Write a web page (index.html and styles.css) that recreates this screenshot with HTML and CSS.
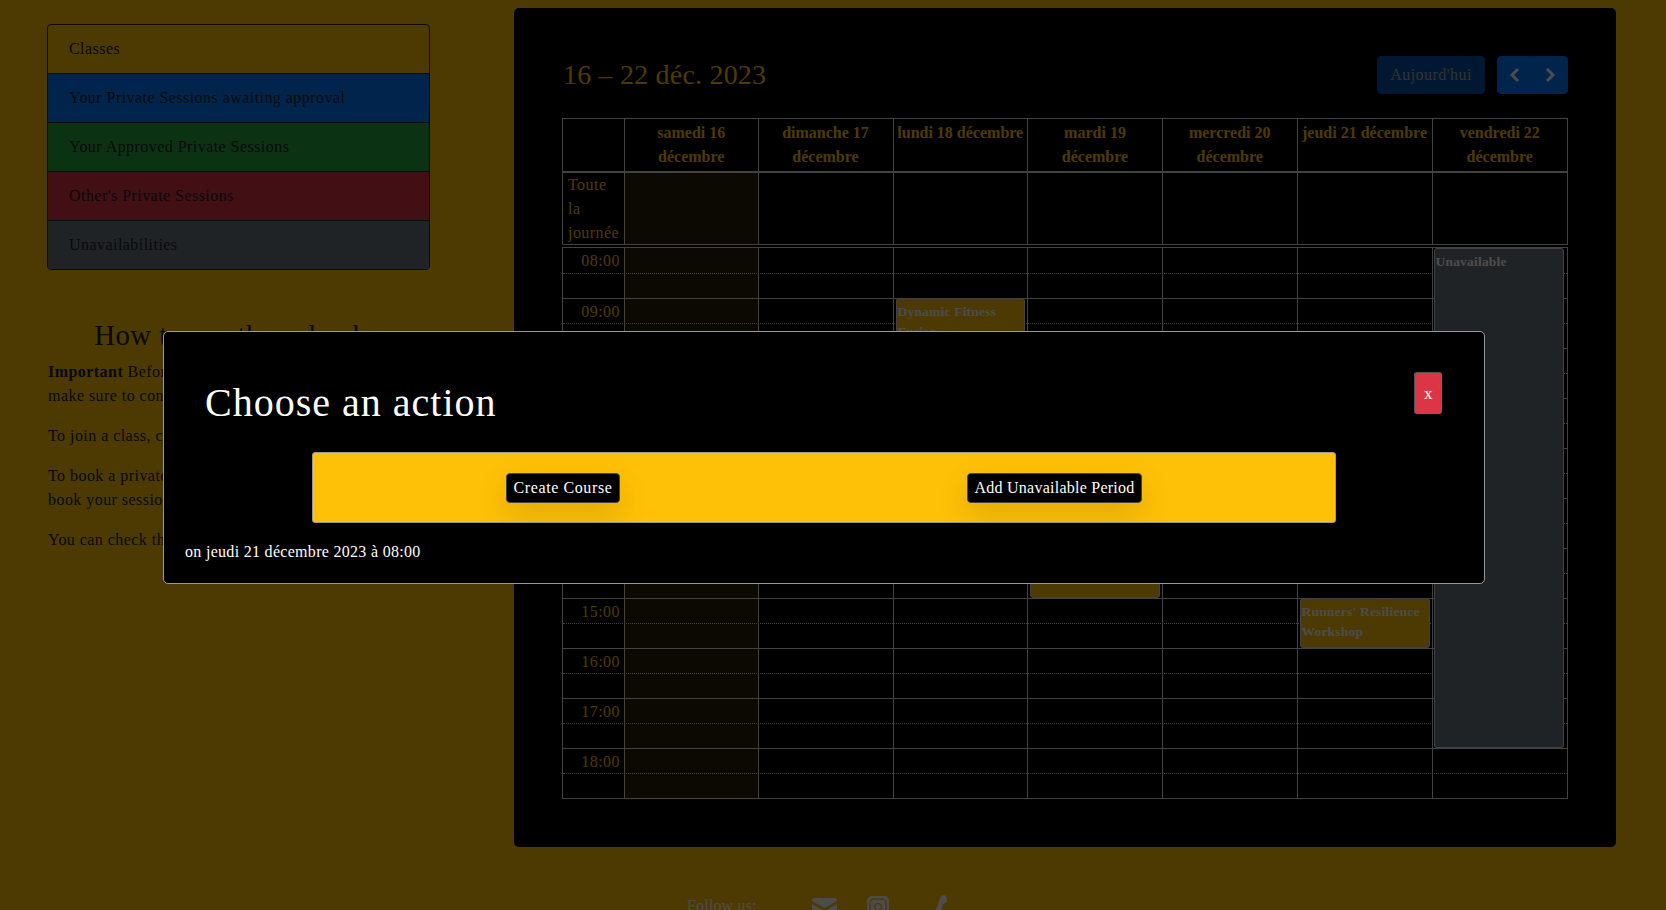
FILE: index.html

```html
<!DOCTYPE html>
<html lang="fr">
<head>
    <meta charset="UTF-8">
    <meta name="viewport" content="width=device-width, initial-scale=1.0">
    <title>Schedule</title>
    <link rel="stylesheet" href="styles.css">
</head>
<body>
    <div class="page">
        <aside class="side">
            <ul class="legend">
                <li>Classes</li>
                <li class="blue">Your Private Sessions awaiting approval</li>
                <li class="green">Your Approved Private Sessions</li>
                <li class="red">Other's Private Sessions</li>
                <li class="grey">Unavailabilities</li>
            </ul>
            <h3>How to use the calendar</h3>
            <p><strong>Important</strong> Before booking a class or a session,<br>make sure to connect to your account.</p>
            <p>To join a class, click on it in the calendar.</p>
            <p>To book a private session, click on a free time slot and<br>book your session with the form that opens.</p>
            <p>You can check the state of your bookings here.</p>
        </aside>

        <section class="panel">
            <div class="toolbar">
                <h2>16 – 22 déc. 2023</h2>
                <div class="nav">
                    <button class="today">Aujourd'hui</button>
                    <div class="arrows">
                        <button aria-label="prev">
                            <svg width="12" height="16" viewBox="0 0 12 16"><polyline points="9,2 3,8 9,14"/></svg>
                        </button>
                        <button aria-label="next">
                            <svg width="12" height="16" viewBox="0 0 12 16"><polyline points="3,2 9,8 3,14"/></svg>
                        </button>
                    </div>
                </div>
            </div>

            <div class="calendar">
                <div class="days">
                    <div></div>
                    <div>samedi 16<br>décembre</div>
                    <div>dimanche 17<br>décembre</div>
                    <div>lundi 18 décembre</div>
                    <div>mardi 19<br>décembre</div>
                    <div>mercredi 20<br>décembre</div>
                    <div>jeudi 21 décembre</div>
                    <div>vendredi 22<br>décembre</div>
                </div>
                <div class="allday">
                    <div class="allday-label">Toute<br>la<br>journée</div>
                    <div class="shade"></div>
                    <div></div>
                    <div></div>
                    <div></div>
                    <div></div>
                    <div></div>
                    <div></div>
                </div>

                <div class="timegrid">
                    <div class="slots">
                        <div class="slot"><span>08:00</span></div><div class="slot minor"></div>
                        <div class="slot"><span>09:00</span></div><div class="slot minor"></div>
                        <div class="slot"><span>10:00</span></div><div class="slot minor"></div>
                        <div class="slot"><span>11:00</span></div><div class="slot minor"></div>
                        <div class="slot"><span>12:00</span></div><div class="slot minor"></div>
                        <div class="slot"><span>13:00</span></div><div class="slot minor"></div>
                        <div class="slot"><span>14:00</span></div><div class="slot minor"></div>
                        <div class="slot"><span>15:00</span></div><div class="slot minor"></div>
                        <div class="slot"><span>16:00</span></div><div class="slot minor"></div>
                        <div class="slot"><span>17:00</span></div><div class="slot minor"></div>
                        <div class="slot"><span>18:00</span></div><div class="slot minor"></div>
                    </div>
                    <!-- vertical lines and events lie over the slot rows -->
                    <div class="columns">
                        <div></div>
                        <div class="shade"></div>
                        <div></div>
                        <div><a class="event" style="top:50px;height:100px">Dynamic Fitness Fusion</a></div>
                        <div><a class="event" style="top:200px;height:150px">Core Strength</a></div>
                        <div></div>
                        <div><a class="event" style="top:350px;height:50px">Runners' Resilience Workshop</a></div>
                        <div><a class="event off" style="top:0;height:500px">Unavailable</a></div>
                    </div>
                </div>
            </div>
        </section>
    </div>

    <footer class="footer">
        <span>Follow us:</span>
        <svg class="mail" width="25" height="19" viewBox="0 0 25 19"><path d="M2 0h21a2 2 0 0 1 2 2v1L12.500 10 0 3V2a2 2 0 0 1 2-2zM0 6l12.500 7L25 6v11a2 2 0 0 1-2 2H2a2 2 0 0 1-2-2z"/></svg>
        <svg class="insta" width="22" height="22" viewBox="0 0 22 22"><rect width="22" height="22" rx="5"/><rect x="3" y="3" width="16" height="16" rx="4" class="cut"/><circle cx="11" cy="11" r="3.500" class="cut"/></svg>
        <svg class="phone" width="20" height="24" viewBox="0 0 20 24"><path d="M14 1c2-1 4-1 5 0l1 5c0 1-3 3-4 3l-1 4c-2 4-5 7-9 9l-5 1c4-4 8-8 10-13l1-4z"/></svg>
    </footer>

    <div class="overlay">
        <div class="modal">
            <div class="modal-head">
                <h1>Choose an action</h1>
                <button class="close">x</button>
            </div>
            <div class="actions">
                <button class="create">Create Course</button>
                <button class="unavailable">Add Unavailable Period</button>
            </div>
            <p class="when">on jeudi 21 décembre 2023 à 08:00</p>
        </div>
    </div>
</body>
</html>
```

FILE: styles.css

```css
* { box-sizing: border-box; }
body { margin: 0; height: 910px; overflow: hidden; background: #ffc107; color: #212529; font: 16px/24px "Liberation Serif", serif; letter-spacing: .45px; }
button { font: inherit; letter-spacing: inherit; cursor: pointer; }

.page { display: flex; align-items: flex-start; padding: 8px 50px 0 47px; }
.side { width: 383px; margin-top: 16px; }
.side h3 { margin: 48px 0 8px; font-size: 28.800px; line-height: 34px; font-weight: 400; text-align: center; }
.side p { margin: 0 0 16px 1px; }

.legend { list-style: none; margin: 0; padding: 0; border: 1px solid #212529; border-radius: 4px; overflow: hidden; }
.legend li { height: 49px; padding: 12px 21px; border-top: 1px solid #212529; }
.legend li:first-child { height: 48px; border-top: 0; }
.blue { background: #007bff; }
.green { background: #28a745; }
.red { background: #dc3545; }
.grey { background: #6c757d; }

.panel { width: 1102px; height: 839px; margin-left: 84px; padding: 48px; background: #000; border-radius: 5px; color: #ffc107; }
.toolbar { display: flex; justify-content: space-between; align-items: center; height: 38px; margin-bottom: 24px; }
.toolbar h2 { margin: 0 0 0 1px; font-size: 28px; line-height: 34px; font-weight: 400; letter-spacing: .2px; }
.nav { display: flex; gap: 12px; }
.nav button { height: 38px; border: 1px solid #007bff; background: #007bff; color: #fff; }
.today { width: 108px; border-radius: 4px; opacity: .65; }
.arrows { display: flex; }
.arrows button { display: flex; align-items: center; justify-content: center; width: 35.500px; padding: 0; }
.arrows button:first-child { border-radius: 4px 0 0 4px; }
.arrows button:last-child { border-radius: 0 4px 4px 0; }
.arrows polyline { fill: none; stroke: #fff; stroke-width: 3; }

.days, .allday, .columns { display: grid; grid-template-columns: 61px 133.500px 135px 134.500px 135px 134.500px 135px 1fr; }
.days { height: 55px; border: 1px solid #ddd; border-bottom-width: 2px; }
.days > div { padding-top: 2px; border-left: 1px solid #ddd; font-weight: 700; text-align: center; white-space: nowrap; letter-spacing: 0; }
.days > div:first-child { border-left: 0; }
.allday { height: 72px; border: 1px solid #ddd; border-top: 0; }
.allday > div { border-left: 1px solid #ddd; }
.allday > div:first-child { border-left: 0; }
.allday-label { padding-left: 5px; }
.shade { background: rgba(255, 220, 40, .15); }

.timegrid { position: relative; margin-top: 2px; border: 1px solid #ddd; }
.slot { height: 25px; border-top: 1px solid #ddd; line-height: 26px; }
.slot:first-child { border-top: 0; }
.slot.minor { border-top: 1px dotted #ddd; }
.slot span { display: block; width: 57px; text-align: right; }

.columns { position: absolute; inset: 0; }
.columns > div { position: relative; border-left: 1px solid #ddd; }
.columns > div:first-child { border-left: 0; }
.event { position: absolute; left: 2px; right: 2px; padding: 3px 1px 0; border: 1px solid #ddd; border-radius: 3px; background: #ffc107; color: #fff; font-size: 13.500px; line-height: 20px; font-weight: 700; letter-spacing: .2px; }
.event.off { left: 1px; right: 3px; background: #6c757d; }

.footer { display: flex; align-items: flex-start; margin: 47px 0 0 687px; color: #fff; letter-spacing: .15px; }
.footer svg { flex: none; fill: #fff; }
.mail { margin: 4px 0 0 55px; }
.insta { margin: 2px 0 0 30px; }
.insta .cut { fill: none; stroke: #ffc107; stroke-width: 1.500; }
.phone { margin: 1px 0 0 38px; }

.overlay { position: fixed; inset: 0; background: rgba(0, 0, 0, .7); }
.modal { position: absolute; left: 163px; top: 331px; width: 1322px; height: 253px; padding: 40px 42px 0 21px; background: #000; border: 1px solid #999; border-radius: 5px; color: #fff; }
.modal-head { display: flex; justify-content: space-between; align-items: flex-start; height: 80px; padding-left: 20px; }
.modal-head h1 { margin: 7px 0 0; font-size: 40px; line-height: 48px; font-weight: 400; letter-spacing: 1px; }
.close { width: 28px; height: 42px; padding: 0; border: 0; border-top: 1px solid #555; border-left: 1px solid #555; border-radius: 3px; background: #dc3545; color: #fff; font-size: 17px; }
.actions { display: flex; align-items: center; width: 1024px; height: 71px; margin-left: 127px; padding-left: 193px; gap: 347px; background: #ffc107; border: 1px solid #999; border-radius: 3px; }
.actions button { height: 30px; padding: 0; border: 1px solid #444; border-radius: 4px; background: #000; color: #fff; white-space: nowrap; box-shadow: 0 12px 32px rgba(0, 0, 0, .14); }
.create { width: 114px; letter-spacing: .6px; }
.unavailable { width: 175px; letter-spacing: .25px; }
.when { margin: 17px 0 0; letter-spacing: .3px; }
```
